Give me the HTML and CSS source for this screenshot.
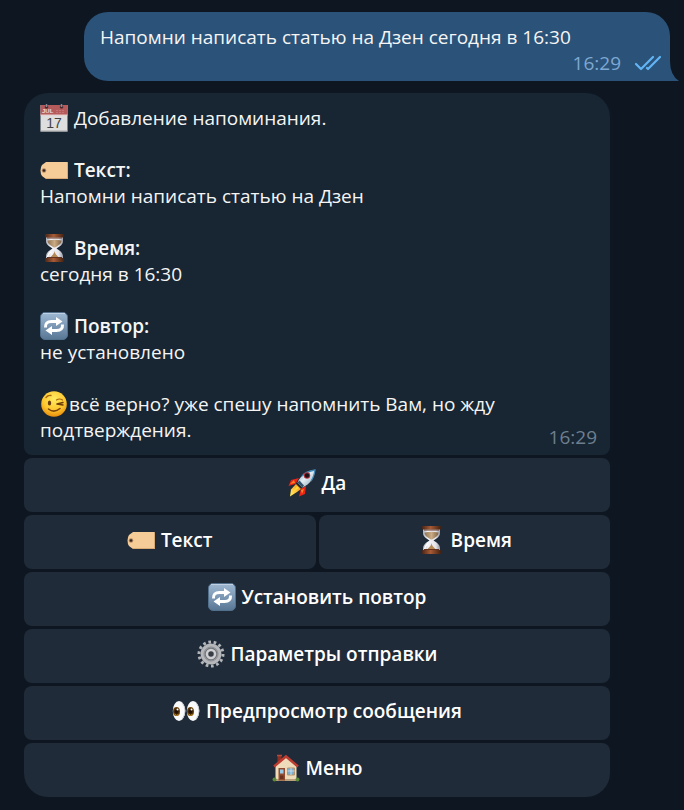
FILE: index.html
```html
<!DOCTYPE html>
<html lang="ru">
<head>
    <meta charset="UTF-8">
    <meta name="viewport" content="width=device-width, initial-scale=1.0">
    <title>Напоминания</title>
    <link rel="stylesheet" href="styles.css">
</head>
<body>
<!-- Shared icons -->
<svg class="sprite" aria-hidden="true">
    <defs>
        <linearGradient id="blue" x1="0" y1="0" x2="0" y2="1">
            <stop offset="0" stop-color="#9fb9d3"/>
            <stop offset="1" stop-color="#587795"/>
        </linearGradient>
        <linearGradient id="wood" x1="0" y1="0" x2="1" y2="0">
            <stop offset="0" stop-color="#4a2416"/>
            <stop offset=".45" stop-color="#a75b36"/>
            <stop offset="1" stop-color="#43200f"/>
        </linearGradient>
        <linearGradient id="glass" x1="0" y1="0" x2="1" y2="0">
            <stop offset="0" stop-color="#aeb1bb"/>
            <stop offset=".3" stop-color="#f5f5fa"/>
            <stop offset=".75" stop-color="#e4e4eb"/>
            <stop offset="1" stop-color="#989ba6"/>
        </linearGradient>
        <linearGradient id="sand" x1="0" y1="0" x2="1" y2="0">
            <stop offset="0" stop-color="#8f7454"/>
            <stop offset=".5" stop-color="#c9ab85"/>
            <stop offset="1" stop-color="#806345"/>
        </linearGradient>
        <radialGradient id="face" cx=".5" cy=".3" r=".75">
            <stop offset="0" stop-color="#ffec62"/>
            <stop offset=".6" stop-color="#fdc52d"/>
            <stop offset="1" stop-color="#e48206"/>
        </radialGradient>
        <linearGradient id="hull" x1="0" y1="0" x2="1" y2="1">
            <stop offset="0" stop-color="#5a93b8"/>
            <stop offset=".45" stop-color="#e6eef3"/>
            <stop offset="1" stop-color="#7c9cb5"/>
        </linearGradient>
        <linearGradient id="flame" x1="1" y1="0" x2="0" y2="1">
            <stop offset="0" stop-color="#ff8a12"/>
            <stop offset="1" stop-color="#fff36a"/>
        </linearGradient>
        <radialGradient id="iris">
            <stop offset=".3" stop-color="#1d0e03"/>
            <stop offset="1" stop-color="#7c4b09"/>
        </radialGradient>
    </defs>

    <symbol id="tag" viewBox="0 0 28 28">
        <path d="M6 6h21q1 0 1 1v15q0 1-1 1H6L2 20Q.5 18 .5 14.500T2 9z" fill="#f5cb97"/>
        <path d="M27.500 7v15.500H6" fill="none" stroke="#d8aa75"/>
        <circle cx="4" cy="14.500" r="2.300" fill="#b58862"/>
        <circle cx="4" cy="14.500" r="1.300" fill="#2c2323"/>
    </symbol>

    <symbol id="hourglass" viewBox="0 0 28 28">
        <path d="M6 3h17v4c0 4-3.500 5.500-6.500 7.500 3 2 6.500 4 6.500 8V25H6v-2.500c0-4 3.500-6 6.500-8C9.500 12.500 6 11 6 7z" fill="url(#glass)"/>
        <path d="M7.500 6.500q7-1.500 14 0c0 3.500-3 5-6.500 7h-1c-3.500-2-6.500-3.500-6.500-7z" fill="url(#sand)"/>
        <path d="M14.500 17c.5 3.500 3 4.500 5.500 8H9c2.500-3.500 5-4.500 5.500-8z" fill="#b58a58"/>
        <path d="M11 17.500q-3 2.500-3.500 6" fill="none" stroke="#fff" stroke-width="1.500"/>
        <rect x="5" y="0" width="19" height="3.500" rx="1" fill="url(#wood)"/>
        <rect x="5" y="24" width="19" height="4" rx="1" fill="url(#wood)"/>
        <path d="M7 4h15M7 23.500h15" stroke="#653420"/>
    </symbol>

    <symbol id="repeat" viewBox="0 0 28 28">
        <rect x=".5" y=".5" width="27" height="27" rx="4.500" fill="url(#blue)" stroke="#526f8c"/>
        <path d="M3 1.500h22" stroke="#bed0e2"/>
        <path d="M5.500 15.500q-.5-6 6-6H17M22.500 12.500q.5 6-6 6H11" fill="none" stroke="#fff" stroke-width="3"/>
        <path d="M16 5l6.500 4.500L16 14zM12 14v9l-6.500-4.500z" fill="#fff"/>
    </symbol>

    <symbol id="check" viewBox="0 0 26 16">
        <path d="M1 9l5 5L18 2M12 13l1 1L25 2" fill="none" stroke="#62b4f5" stroke-width="2.200" stroke-linecap="round" stroke-linejoin="round"/>
    </symbol>
</svg>

<main class="chat">
    <div class="message outgoing">
        <p class="text">Напомни написать статью на Дзен сегодня в 16:30</p>
        <div class="meta">
            <time>16:29</time>
            <svg class="checks" role="img" aria-label="Прочитано"><use href="#check"/></svg>
        </div>
        <svg class="tail" viewBox="0 0 9 20" aria-hidden="true"><path d="M0 0Q0 14 9 20H0z" fill="#2b5278"/></svg>
    </div>

    <div class="message incoming">
        <p>
            <svg class="icon" viewBox="0 0 28 28" aria-hidden="true">
                <path d="M.5 1h27v26.500H.5z" fill="#dedede"/>
                <path d="M.5 1h27v10H.5z" fill="#b65b5c"/>
                <path d="M.5 11h27" stroke="#e9cccc"/>
                <path d="M.5 27h27" stroke="#a8a8a8"/>
                <circle cx="6.500" cy="3" r="1.800" fill="#4a2c30"/>
                <circle cx="21.500" cy="3" r="1.800" fill="#4a2c30"/>
                <path d="M6.500 0v3M21.500 0v3" stroke="#858b94" stroke-width="1.500"/>
                <text class="cal-month" x="2" y="9">JUL</text>
                <path d="M16 6.500h9M16 8.500h9" stroke="#c47474" stroke-dasharray="2 1"/>
                <text class="cal-day" x="14" y="24">17</text>
            </svg>
            Добавление напоминания.
        </p>
        <p>
            <svg class="icon" aria-hidden="true"><use href="#tag"/></svg>
            <b>Текст:</b><br>
            Напомни написать статью на Дзен
        </p>
        <p>
            <svg class="icon" aria-hidden="true"><use href="#hourglass"/></svg>
            <b>Время:</b><br>
            сегодня в 16:30
        </p>
        <p>
            <svg class="icon" aria-hidden="true"><use href="#repeat"/></svg>
            <b>Повтор:</b><br>
            не установлено
        </p>
        <div class="last-row">
            <p><svg class="icon" viewBox="0 0 28 28" aria-hidden="true">
                <circle cx="14" cy="14" r="12.800" fill="url(#face)"/>
                <ellipse cx="9.500" cy="13" rx="1.700" ry="2.500" fill="#6b3d0b"/>
                <path d="M6 7.500q2-2.500 5-2" fill="none" stroke="#a8660d" stroke-width="1.300" stroke-linecap="round"/>
                <path d="M16.500 10q3-2 6 0" fill="none" stroke="#a8660d" stroke-width="1.200" stroke-linecap="round"/>
                <path d="M23 12.500l-6 1.500 6 1" fill="none" stroke="#6b3d0b" stroke-width="1.500" stroke-linecap="round" stroke-linejoin="round"/>
                <path d="M8.500 19q5.500 4.500 11.500-.5" fill="none" stroke="#7b430b" stroke-width="1.600" stroke-linecap="round"/>
            </svg>всё верно? уже спешу напомнить Вам, но жду подтверждения.</p>
            <div class="meta"><time>16:29</time></div>
        </div>
    </div>

    <div class="keyboard">
        <button type="button" class="wide">
            <svg class="icon" viewBox="0 0 28 28" aria-hidden="true">
                <path d="M11 9L3 11 .5 17l7-2zM18 17l-1 8-6 2.500 2-8z" fill="#e92419"/>
                <path d="M6 11l-4 4 5-1zM16 20l-2 5-1-4z" fill="#ff8420"/>
                <path d="M8 15l5 5-4 3-7 4.500 1-7z" fill="url(#flame)"/>
                <path d="M9 17L4 24l7-5" fill="#ffd934"/>
                <path d="M27 1c-8 .5-14 5-17.500 12.500l5 5C22 15 26.500 9 27 1z" fill="url(#hull)"/>
                <path d="M14 7q4-4.500 13-6-1 7-4 11" fill="none" stroke="#4387b4" stroke-width="1.300"/>
                <path d="M9.500 13.500l5 5 1.500-2-4.500-5z" fill="#35536d"/>
                <circle cx="19" cy="6.500" r="3.200" fill="#b03238"/>
                <circle cx="19" cy="6.500" r="2.200" fill="#17151c"/>
            </svg>
            Да
        </button>
        <button type="button">
            <svg class="icon" aria-hidden="true"><use href="#tag"/></svg>
            Текст
        </button>
        <button type="button">
            <svg class="icon" aria-hidden="true"><use href="#hourglass"/></svg>
            Время
        </button>
        <button type="button" class="wide">
            <svg class="icon" aria-hidden="true"><use href="#repeat"/></svg>
            Установить повтор
        </button>
        <button type="button" class="wide">
            <svg class="icon" viewBox="0 0 28 28" aria-hidden="true">
                <circle cx="14" cy="14" r="12" fill="none" stroke="#b2b4b8" stroke-width="3" pathLength="28" stroke-dasharray="1 1"/>
                <circle cx="14" cy="14" r="8.500" fill="#737579" stroke="#b5b7ba" stroke-width="4"/>
                <circle cx="14" cy="14" r="7" fill="none" stroke="#86898e"/>
                <circle cx="14" cy="14" r="4" fill="#383d45" stroke="#cdcfd2" stroke-width="2.500"/>
            </svg>
            Параметры отправки
        </button>
        <button type="button" class="wide">
            <svg class="icon" viewBox="0 0 28 28" aria-hidden="true">
                <ellipse cx="7" cy="14" rx="6.200" ry="10" fill="#fafafa"/>
                <ellipse cx="21" cy="14" rx="6.200" ry="10" fill="#fafafa"/>
                <path d="M10 5.500q6 8 0 17M24 5.500q6 8 0 17" fill="none" stroke="#c9cbd0"/>
                <ellipse cx="4.500" cy="14.500" rx="3.500" ry="4.500" fill="url(#iris)"/>
                <ellipse cx="18.500" cy="14.500" rx="3.500" ry="4.500" fill="url(#iris)"/>
                <path d="M2.500 17q2 2.500 4 .5M16.500 17q2 2.500 4 .5" fill="none" stroke="#c38b18"/>
                <circle cx="5.500" cy="12.500" r="1" fill="#fff"/>
                <circle cx="19.500" cy="12.500" r="1" fill="#fff"/>
            </svg>
            Предпросмотр сообщения
        </button>
        <button type="button" class="wide">
            <svg class="icon" viewBox="0 0 28 28" aria-hidden="true">
                <path d="M5.500 2h4v8h-4z" fill="#8e3024"/>
                <path d="M5 1.500h5" stroke="#b54a38" stroke-width="1.500"/>
                <path d="M3.500 12L14 3l10.500 9v14.500h-21z" fill="#eedbb9"/>
                <path d="M3.500 26h21" stroke="#baa17d" stroke-width="2"/>
                <path d="M2 12.500L14 2.500l12 10" fill="none" stroke="#bd3c32" stroke-width="2.500"/>
                <path d="M6.500 14H13v12.500H6.500z" fill="#914d31"/>
                <path d="M8 15.500h3.500v4H8z" fill="#9ccbea"/>
                <path d="M8 21.500h3.500v3.500H8z" fill="#6d321e"/>
                <path d="M15.500 14h7v7h-7z" fill="#7caed2" stroke="#b7946b"/>
                <path d="M19 14v7M15.500 17h7" stroke="#d8e5ed" stroke-width=".8"/>
                <circle cx="2.500" cy="25.500" r="2" fill="#5d8a38"/>
                <circle cx="25.500" cy="25.500" r="2" fill="#5d8a38"/>
            </svg>
            Меню
        </button>
    </div>
</main>
</body>
</html>
```
FILE: styles.css
```css
:root {
    --bg-page: #0e1621;
    --bg-incoming: #182533;
    --bg-outgoing: #2b5278;
    --bg-button: #1f2b38;
    --color-text: #f5f5f5;
    --color-time: #6d7f8f;
    --color-time-out: #7da8d3;
}

* {
    box-sizing: border-box;
    margin: 0;
    padding: 0;
}

body {
    min-height: 100vh;
    background: var(--bg-page);
    color: var(--color-text);
    font-family: 'Open Sans', 'Noto Sans', sans-serif;
    font-size: 19px;
    line-height: 26px;
}

.sprite {
    position: absolute;
    width: 0;
    height: 0;
}

.chat {
    padding: 12px 14px 12px 24px;
}

.message {
    padding: 12px 16px 5px;
}

.outgoing {
    position: relative;
    margin: 0 0 12px 60px;
    padding-right: 9px;
    border-radius: 24px 24px 0 24px;
    background: var(--bg-outgoing);
}

.incoming {
    margin-right: 60px;
    padding-right: 13px;
    border-radius: 24px 24px 8px 8px;
    background: var(--bg-incoming);
}

.incoming > p {
    margin-bottom: 26px;
}

.incoming b {
    font-weight: 600;
}

.last-row {
    display: flex;
    align-items: flex-end;
    gap: 12px;
}

.last-row p {
    flex: 1;
    margin-bottom: 7px;
}

.meta {
    display: flex;
    justify-content: flex-end;
    align-items: center;
    gap: 14px;
    color: var(--color-time);
}

.outgoing .meta {
    color: var(--color-time-out);
}

.checks {
    width: 26px;
    height: 16px;
}

/* Corner that sticks out of the bubble */
.tail {
    position: absolute;
    left: 100%;
    bottom: 0;
    width: 9px;
    height: 20px;
}

.icon {
    width: 28px;
    height: 28px;
    margin: -4px 1px -4px 0;
    vertical-align: -3px;
}

.cal-month,
.cal-day {
    font-family: 'Liberation Sans', sans-serif;
}

.cal-month {
    fill: #f0dada;
    font-size: 6px;
    font-weight: 700;
}

.cal-day {
    fill: #414141;
    font-size: 14px;
    text-anchor: middle;
}

.keyboard {
    display: grid;
    grid-template-columns: 1fr 1fr;
    gap: 3px;
    margin: 3px 60px 0 0;
}

.keyboard button {
    padding: 12px 16px 16px;
    border: none;
    border-radius: 8px;
    background: var(--bg-button);
    color: #ffffff;
    font: inherit;
    font-weight: 600;
    cursor: pointer;
}

.keyboard button:hover {
    background: #263545;
}

.keyboard .wide {
    grid-column: span 2;
}

.keyboard .wide:last-child {
    border-radius: 8px 8px 24px 24px;
}
```
